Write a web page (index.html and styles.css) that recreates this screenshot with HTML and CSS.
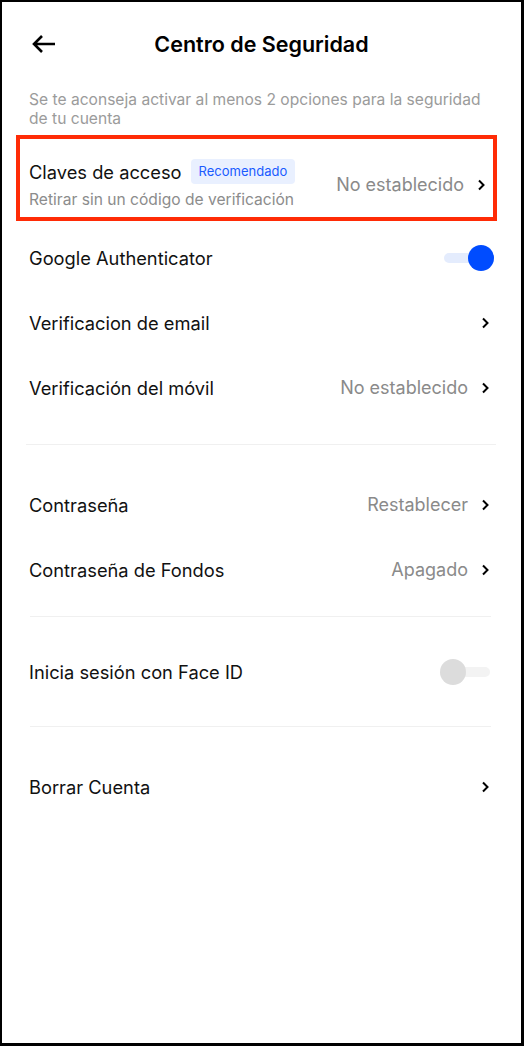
FILE: index.html
```html
<!DOCTYPE html>
<html lang="es">
<head>
  <meta charset="UTF-8" />
  <meta name="viewport" content="width=device-width, initial-scale=1.0"/>
  <title>Centro de Seguridad</title>
  <link rel="stylesheet" href="styles.css">
</head>
<body>

  <div class="screen">
    <div class="header">
      <svg class="back" width="26" height="20" viewBox="0 0 26 20">
        <path d="M24 10H3M11 2L3 10l8 8" fill="none" stroke="#000" stroke-width="2.6"/>
      </svg>
      <h1>Centro de Seguridad</h1>
    </div>

    <p class="hint">Se te aconseja activar al menos 2 opciones para la seguridad de tu cuenta</p>

    <div class="row row-boxed">
      <div class="row-main">
        <div class="row-title">Claves de acceso <span class="badge">Recomendado</span></div>
        <div class="row-sub">Retirar sin un código de verificación</div>
      </div>
      <span class="value">No establecido</span>
      <svg class="chev" width="9" height="12" viewBox="0 0 9 12"><path d="M2 1.5l4.5 4.5L2 10.5" fill="none" stroke="#000" stroke-width="2"/></svg>
    </div>

    <div class="row">
      <span class="label">Google Authenticator</span>
      <span class="switch on"><span class="knob"></span></span>
    </div>

    <div class="row">
      <span class="label">Verificacion de email</span>
      <svg class="chev" width="9" height="12" viewBox="0 0 9 12"><path d="M2 1.5l4.5 4.5L2 10.5" fill="none" stroke="#000" stroke-width="2"/></svg>
    </div>

    <div class="row">
      <span class="label">Verificación del móvil</span>
      <span class="value">No establecido</span>
      <svg class="chev" width="9" height="12" viewBox="0 0 9 12"><path d="M2 1.5l4.5 4.5L2 10.5" fill="none" stroke="#000" stroke-width="2"/></svg>
    </div>

    <div class="divider first"></div>

    <div class="row gap-top">
      <span class="label">Contraseña</span>
      <span class="value">Restablecer</span>
      <svg class="chev" width="9" height="12" viewBox="0 0 9 12"><path d="M2 1.5l4.5 4.5L2 10.5" fill="none" stroke="#000" stroke-width="2"/></svg>
    </div>

    <div class="row">
      <span class="label">Contraseña de Fondos</span>
      <span class="value">Apagado</span>
      <svg class="chev" width="9" height="12" viewBox="0 0 9 12"><path d="M2 1.5l4.5 4.5L2 10.5" fill="none" stroke="#000" stroke-width="2"/></svg>
    </div>

    <div class="divider second"></div>

    <div class="row face">
      <span class="label">Inicia sesión con Face ID</span>
      <span class="switch off"><span class="knob"></span></span>
    </div>

    <div class="divider third"></div>

    <div class="row gap-top">
      <span class="label">Borrar Cuenta</span>
      <svg class="chev" width="9" height="12" viewBox="0 0 9 12"><path d="M2 1.5l4.5 4.5L2 10.5" fill="none" stroke="#000" stroke-width="2"/></svg>
    </div>
  </div>

</body>
</html>
```

FILE: styles.css
```css
* {
  box-sizing: border-box;
}

body {
  margin: 0;
  font-family: Inter, "Noto Sans", sans-serif;
  background: #fff;
  color: #111;
}

.screen {
  width: 524px;
  height: 1046px;
  border: 2px solid #000;
  border-right-width: 3px;
  border-bottom-width: 3px;
}

.header {
  position: relative;
  height: 84px;
  display: flex;
  align-items: center;
  justify-content: center;
}

.header .back {
  position: absolute;
  left: 29px;
  top: 32px;
}

.header h1 {
  margin: 0;
  font-size: 21.5px;
  font-weight: 600;
  color: #000;
}

.hint {
  margin: 4px 0 0;
  padding: 0 28px 0 27px;
  font-size: 15.6px;
  line-height: 19px;
  color: #9b9b9b;
}

.row {
  display: flex;
  align-items: center;
  height: 65px;
  padding: 0 31px 0 27px;
  font-size: 18.3px;
}

.row-boxed {
  height: 86px;
  margin: 7px 24px 4px 14px;
  padding: 0 7px 0 9px;
  border: 4px solid #ff2b06;
}

.row-main {
  flex: 1;
  display: flex;
  flex-direction: column;
  gap: 6px;
  margin-top: 12px;
}

.row-title {
  display: flex;
  align-items: center;
  gap: 9px;
}

.badge {
  font-size: 13px;
  color: #1a5bff;
  background: #e9f0ff;
  border-radius: 4px;
  padding: 4px 8px;
  line-height: 17px;
}

.row-sub {
  font-size: 15.6px;
  color: #8c8c8c;
}

.row-boxed .value,
.row-boxed .chev {
  margin-top: 13px;
}

.label {
  flex: 1;
  color: #111;
}

.value {
  color: #8a8a8a;
  font-size: 18px;
  margin-right: 13px;
}

.chev {
  flex-shrink: 0;
}

.divider {
  height: 1px;
  background: #f0f0f0;
}

.divider.first {
  margin: 24px 25px 0 24px;
}

.divider.second {
  margin: 14px 30px 0 28px;
}

.divider.third {
  margin: 22px 30px 0 28px;
}

.gap-top {
  margin-top: 27px;
}

.face {
  margin-top: 22px;
}

.switch {
  position: relative;
  width: 50px;
  height: 10px;
  border-radius: 5px;
}

.switch.on {
  background: #e4ecfd;
  margin-right: -4px;
}

.switch.off {
  background: #f3f3f3;
}

.knob {
  position: absolute;
  top: -8px;
  width: 26px;
  height: 26px;
  border-radius: 50%;
}

.switch.on .knob {
  right: 0;
  background: #004cff;
}

.switch.off .knob {
  left: 0;
  background: #dcdcdc;
}
```
